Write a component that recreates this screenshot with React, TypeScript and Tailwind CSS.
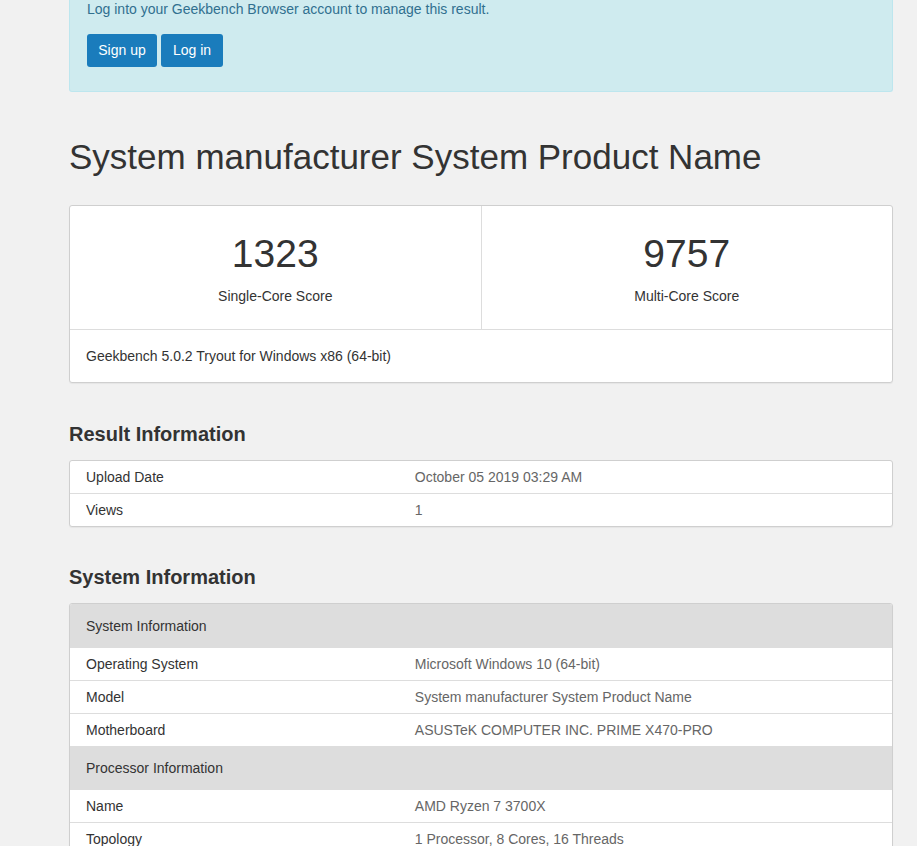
const sans = { fontFamily: '"Liberation Sans", Arial, sans-serif' }

type Row = { label: string; value: string; header?: boolean }

const resultRows: Row[] = [
  { label: "Upload Date", value: "October 05 2019 03:29 AM" },
  { label: "Views", value: "1" },
]

const systemRows: Row[] = [
  { label: "System Information", value: "", header: true },
  { label: "Operating System", value: "Microsoft Windows 10 (64-bit)" },
  { label: "Model", value: "System manufacturer System Product Name" },
  { label: "Motherboard", value: "ASUSTeK COMPUTER INC. PRIME X470-PRO" },
  { label: "Processor Information", value: "", header: true },
  { label: "Name", value: "AMD Ryzen 7 3700X" },
  { label: "Topology", value: "1 Processor, 8 Cores, 16 Threads" },
  { label: "Identifier", value: "AuthenticAMD Family 23 Model 113 Stepping 0" },
]

function InfoTable({ rows }: { rows: Row[] }) {
  return (
    <div className="overflow-hidden rounded-[3px] border border-[#cfcfcf] bg-white shadow-[0_1px_1px_rgba(0,0,0,0.05)]">
      {rows.map((row, i) => {
        if (row.header) {
          return (
            <div
              key={i}
              className="flex h-[44px] items-center bg-[#dddddd] px-[16px] text-[14px] text-[#333]"
            >
              {row.label}
            </div>
          )
        }
        const divided = i > 0 && !rows[i - 1].header
        return (
          <div
            key={i}
            className={`flex items-center text-[14px] ${
              divided ? "h-[33px] border-t border-[#dddddd]" : "h-[32px]"
            }`}
          >
            <div className="w-[40%] pl-[16px] text-[#333]">{row.label}</div>
            <div className="flex-1 pl-[16px] text-[#666]">{row.value}</div>
          </div>
        )
      })}
    </div>
  )
}

export default function App() {
  return (
    <div className="min-h-[846px] bg-[#f1f1f1] pb-10" style={sans}>
      <div className="ml-[69px] w-[824px]">
        <div className="rounded-b-[3px] border border-t-0 border-[#bde6ee] bg-[#cfebef] px-[17px] pb-[24px] text-[14px] text-[#31708f]">
          <p className="mt-[-1px] leading-[20px]">Log into your Geekbench Browser account to manage this result.</p>
          <div className="mt-[15px] flex gap-[4px]">
            <button className="h-[33px] w-[70px] rounded-[3px] bg-[#1a7cbc] text-[14px] text-white">Sign up</button>
            <button className="h-[33px] w-[62px] rounded-[3px] bg-[#1a7cbc] text-[14px] text-white">Log in</button>
          </div>
        </div>

        <h1 className="mt-[43px] text-[35px] leading-[44px] text-[#333]">System manufacturer System Product Name</h1>

        <div className="mt-[26px] rounded-[3px] border border-[#cfcfcf] bg-white shadow-[0_1px_1px_rgba(0,0,0,0.05)]">
          <div className="flex h-[124px] border-b border-[#dddddd]">
            <div className="flex flex-1 flex-col items-center border-r border-[#dddddd] pt-[24px]">
              <div className="text-[39px] leading-[48px] text-[#333]">1323</div>
              <div className="mt-[8px] text-[14px] text-[#333]">Single-Core Score</div>
            </div>
            <div className="flex flex-1 flex-col items-center pt-[24px]">
              <div className="text-[39px] leading-[48px] text-[#333]">9757</div>
              <div className="mt-[8px] text-[14px] text-[#333]">Multi-Core Score</div>
            </div>
          </div>
          <div className="flex h-[52px] items-center px-[16px] text-[14px] text-[#333]">
            Geekbench 5.0.2 Tryout for Windows x86 (64-bit)
          </div>
        </div>

        <h2 className="mt-[39px] text-[20px] font-bold leading-[24px] text-[#333]">Result Information</h2>
        <div className="mt-[14px]">
          <InfoTable rows={resultRows} />
        </div>

        <h2 className="mt-[38px] text-[20px] font-bold leading-[24px] text-[#333]">System Information</h2>
        <div className="mt-[14px]">
          <InfoTable rows={systemRows} />
        </div>
      </div>
    </div>
  )
}
